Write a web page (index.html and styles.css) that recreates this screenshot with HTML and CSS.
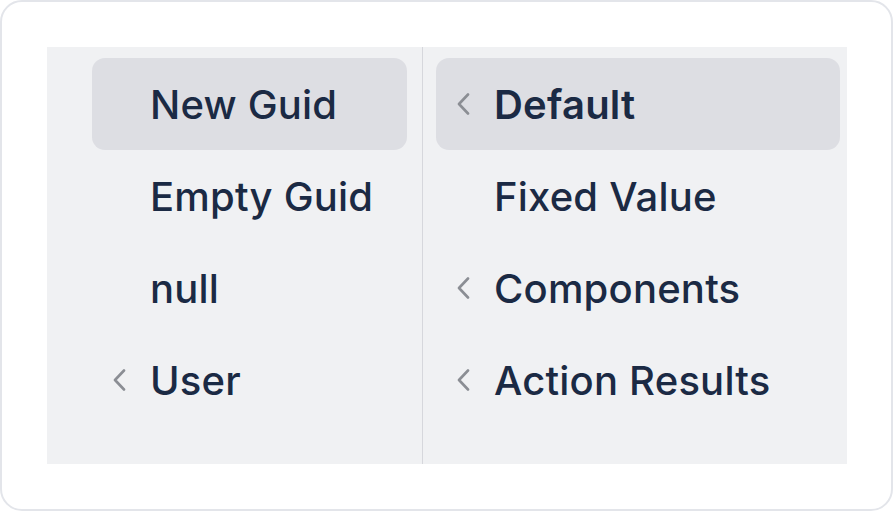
FILE: index.html
```html
<!DOCTYPE html>
<html>
<head>
<meta charset="utf-8">
<link rel="stylesheet" href="styles.css">
</head>
<body>
<div class="card">
  <div class="panel">
    <div class="col col-left">
      <div class="item active"><span class="icon"></span><span class="label">New Guid</span></div>
      <div class="item"><span class="icon"></span><span class="label">Empty Guid</span></div>
      <div class="item"><span class="icon"></span><span class="label">null</span></div>
      <div class="item"><span class="icon"><svg width="14" height="22" viewBox="0 0 14 22"><polyline points="12,1.5 3,11 12,20.5" fill="none" stroke="#8b8e94" stroke-width="2.6" stroke-linecap="round" stroke-linejoin="round"/></svg></span><span class="label">User</span></div>
    </div>
    <div class="divider"></div>
    <div class="col col-right">
      <div class="item active"><span class="icon"><svg width="14" height="22" viewBox="0 0 14 22"><polyline points="12,1.5 3,11 12,20.5" fill="none" stroke="#8b8e94" stroke-width="2.6" stroke-linecap="round" stroke-linejoin="round"/></svg></span><span class="label strong">Default</span></div>
      <div class="item"><span class="icon"></span><span class="label">Fixed Value</span></div>
      <div class="item"><span class="icon"><svg width="14" height="22" viewBox="0 0 14 22"><polyline points="12,1.5 3,11 12,20.5" fill="none" stroke="#8b8e94" stroke-width="2.6" stroke-linecap="round" stroke-linejoin="round"/></svg></span><span class="label">Components</span></div>
      <div class="item"><span class="icon"><svg width="14" height="22" viewBox="0 0 14 22"><polyline points="12,1.5 3,11 12,20.5" fill="none" stroke="#8b8e94" stroke-width="2.6" stroke-linecap="round" stroke-linejoin="round"/></svg></span><span class="label">Action Results</span></div>
    </div>
  </div>
</div>
</body>
</html>
```
FILE: styles.css
```css
html, body {
  margin: 0;
  padding: 0;
  background: #ffffff;
}
body {
  font-family: Inter, "Noto Sans", sans-serif;
}
.card {
  box-sizing: border-box;
  width: 893px;
  height: 511px;
  border: 2px solid #e3e5ea;
  border-radius: 22px;
  padding: 45px 44px 45px 45px;
  background: #ffffff;
}
.panel {
  display: flex;
  height: 417px;
  width: 800px;
  background: #f0f1f3;
}
.col {
  box-sizing: border-box;
  display: flex;
  flex-direction: column;
  padding-top: 11px;
}
.col-left {
  width: 375px;
  padding-left: 45px;
  padding-right: 15px;
}
.col-right {
  flex: 1;
  padding-left: 13px;
  padding-right: 7px;
}
.divider {
  width: 1px;
  flex-shrink: 0;
  background: #d6d7dc;
}
.item {
  display: flex;
  align-items: center;
  height: 92px;
  border-radius: 13px;
  padding-left: 20px;
}
.item.active {
  background: #dddee3;
}
.icon {
  display: flex;
  align-items: center;
  width: 14px;
  height: 22px;
  margin-right: 24px;
}
.label {
  font-size: 40px;
  font-weight: 500;
  color: #1b2a44;
  letter-spacing: 0.2px;
  line-height: 1;
  padding-top: 2px;
}
.label.strong {
  font-weight: 600;
}
```
